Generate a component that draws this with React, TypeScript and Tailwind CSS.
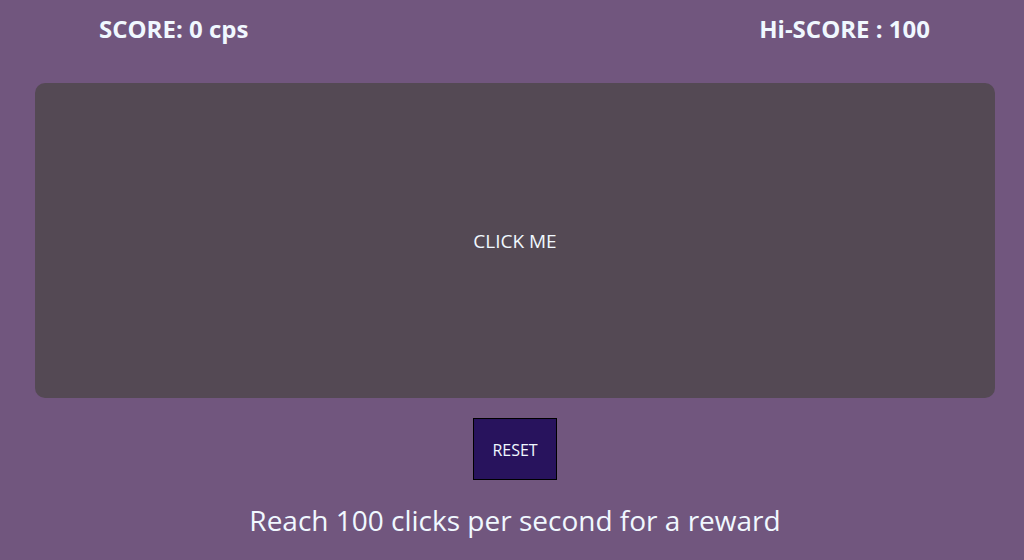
export default function App() {
  return (
    <div
      className="w-[1024px] h-[560px] bg-[#71567e] text-[#f0f8ff] overflow-hidden flex flex-col items-center pl-[6px]"
      style={{ fontFamily: '"Open Sans", "Noto Sans", sans-serif' }}
    >
      <div className="w-full flex justify-between pl-[93px] pr-[94px] pt-[13px] h-[83px]">
        <h2 className="text-[24px] font-bold leading-[32px]">SCORE: 0 cps</h2>
        <h2 className="text-[24px] font-bold leading-[32px]">Hi-SCORE : 100</h2>
      </div>
      <div className="w-[960px] h-[315px] bg-[#544954] rounded-[10px] flex items-center justify-center text-[19px] pt-[2px] cursor-pointer">
        CLICK ME
      </div>
      <button className="mt-[20px] w-[84px] h-[62px] bg-[#28135d] border border-black text-[16px] text-[#f0f8ff] pt-[1px]">
        RESET
      </button>
      <p className="mt-[21px] text-[28px] leading-[38px]">Reach 100 clicks per second for a reward</p>
    </div>
  );
}
